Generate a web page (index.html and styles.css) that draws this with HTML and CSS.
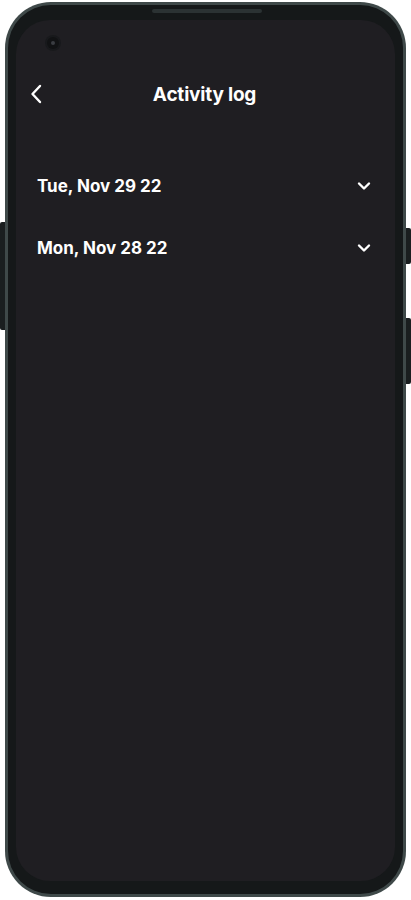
FILE: index.html
```html
<!DOCTYPE html>
<html lang="en">
<head>
	<title>Activity log</title>
	<meta charset="utf-8">
	<meta name="viewport" content="width=device-width, initial-scale=1">

	<link rel="stylesheet" href="styles.css">
</head>

<body>
	<div class="device">
		<span class="side-key left-key"></span>
		<span class="side-key right-key-1"></span>
		<span class="side-key right-key-2"></span>

		<div class="bezel">
			<span class="speaker"></span>
			<div class="screen">
				<span class="camera"></span>

				<header class="topbar">
					<button class="back" aria-label="Back">
						<svg width="12" height="20" viewBox="0 0 12 20">
							<path d="M10 2 L2.5 10 L10 18" fill="none" stroke="#fff" stroke-width="2.4" stroke-linecap="round" stroke-linejoin="round"/>
						</svg>
					</button>
					<h1>Activity log</h1>
					<span class="spacer"></span>
				</header>

				<ul class="log-list">
					<li class="log-day">
						<span>Tue, Nov 29 22</span>
						<svg width="14" height="10" viewBox="0 0 14 10">
							<path d="M2 2.5 L7 7.5 L12 2.5" fill="none" stroke="#fff" stroke-width="2.4" stroke-linecap="round" stroke-linejoin="round"/>
						</svg>
					</li>
					<li class="log-day">
						<span>Mon, Nov 28 22</span>
						<svg width="14" height="10" viewBox="0 0 14 10">
							<path d="M2 2.5 L7 7.5 L12 2.5" fill="none" stroke="#fff" stroke-width="2.4" stroke-linecap="round" stroke-linejoin="round"/>
						</svg>
					</li>
				</ul>
			</div>
		</div>
	</div>
</body>

</html>
```

FILE: styles.css
```css
body {
	margin: 0;
	padding: 0;
	background: #fff;
	font-family: Inter, "Noto Sans", sans-serif;
}
.device {
	position: relative;
	margin: 2px 5px 0;
	height: 895px;
	box-sizing: border-box;
	padding: 3px;
	border-radius: 46px;
	background: #3f4949;
}
.side-key {
	position: absolute;
	width: 5px;
	background: #1a1e1f;
}
.left-key {
	left: -5px;
	top: 220px;
	height: 108px;
	border-radius: 2px 0 0 2px;
}
.right-key-1 {
	right: -5px;
	top: 226px;
	height: 36px;
	border-radius: 0 2px 2px 0;
}
.right-key-2 {
	right: -5px;
	top: 316px;
	height: 66px;
	border-radius: 0 2px 2px 0;
}
.bezel {
	position: relative;
	height: 100%;
	box-sizing: border-box;
	padding: 15px 8px 13px 8px;
	border-radius: 43px;
	background: #151819;
}
.speaker {
	position: absolute;
	top: 4px;
	left: 144px;
	width: 110px;
	height: 4px;
	border-radius: 2px;
	background: #2b3233;
}
.screen {
	position: relative;
	height: 100%;
	border-radius: 34px;
	background: #1f1e22;
	color: #fff;
}
.camera {
	position: absolute;
	top: 17px;
	left: 31px;
	width: 12px;
	height: 12px;
	border-radius: 50%;
	background: #111214;
	box-shadow: 0 0 0 2px #18191c;
}
.camera::after {
	content: "";
	position: absolute;
	top: 4px;
	left: 4px;
	width: 4px;
	height: 4px;
	border-radius: 50%;
	background: #3a3d42;
}
.topbar {
	display: flex;
	align-items: center;
	padding: 64px 16px 0 14px;
	height: 20px;
}
.back {
	display: flex;
	width: 30px;
	padding: 0;
	background: none;
	border: 0;
	cursor: pointer;
}
.topbar h1 {
	flex: 1;
	margin: 0;
	text-align: center;
	font-size: 19px;
	font-weight: 700;
	letter-spacing: -0.2px;
}
.spacer {
	width: 30px;
}
.log-list {
	list-style: none;
	margin: 0;
	padding: 72px 24px 0 21px;
	display: flex;
	flex-direction: column;
	gap: 42px;
}
.log-day {
	display: flex;
	align-items: center;
	justify-content: space-between;
	height: 20px;
	font-size: 17px;
	font-weight: 700;
}
```
